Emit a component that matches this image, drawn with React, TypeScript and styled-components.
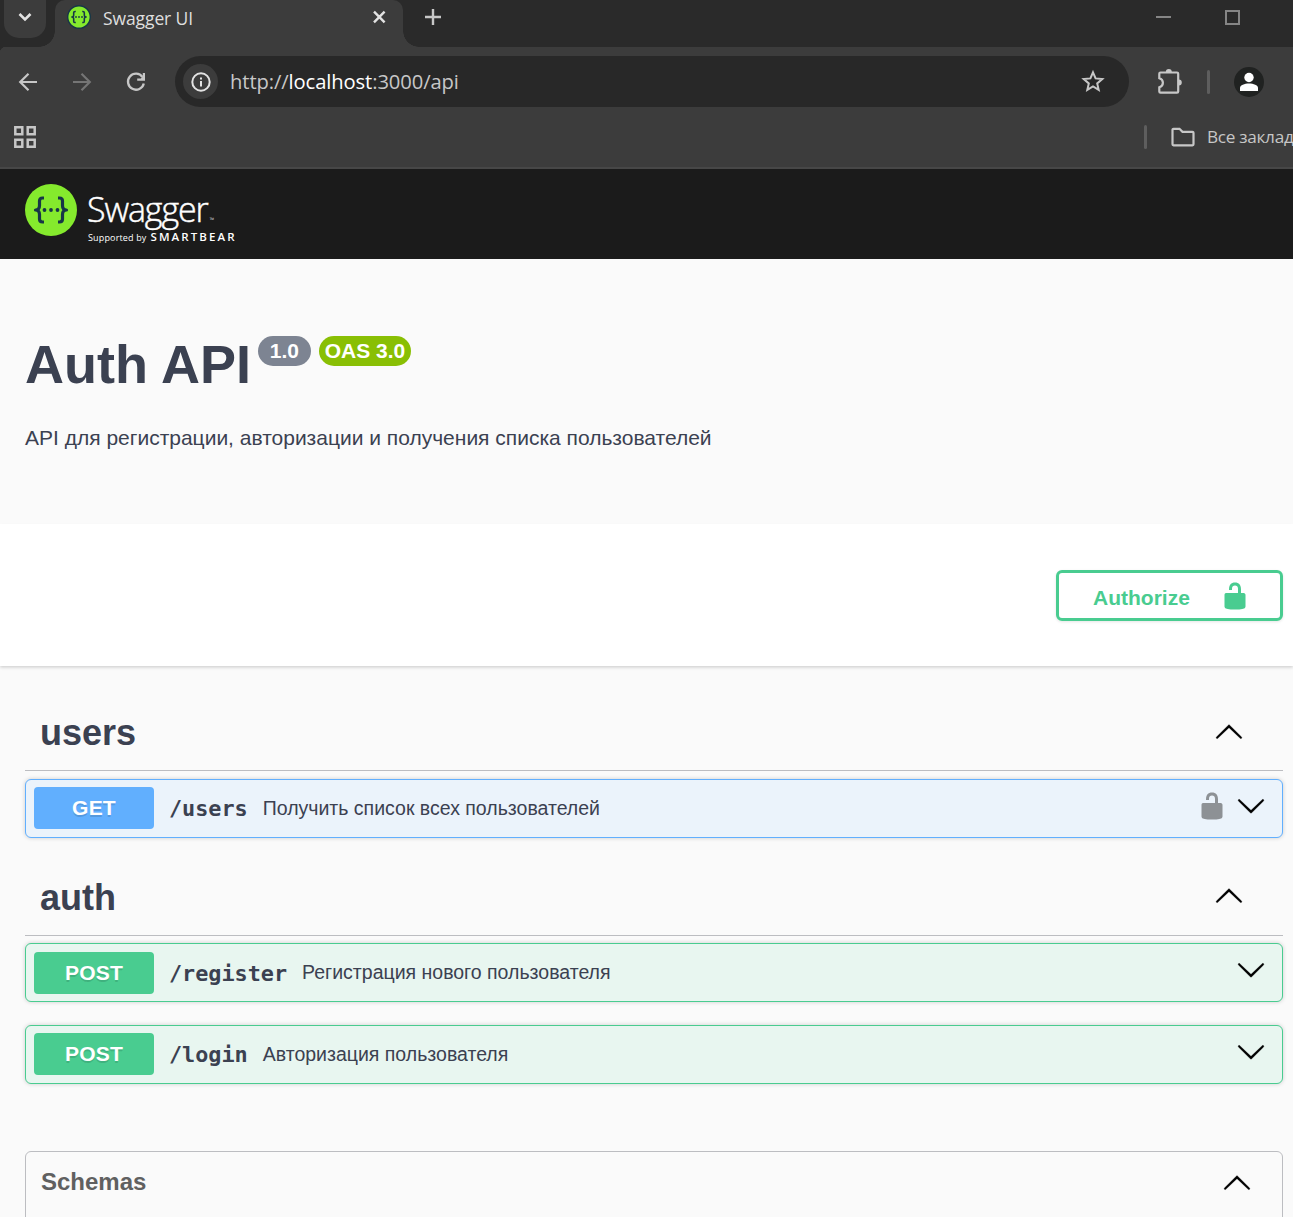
import React from "react";
import styled, { createGlobalStyle } from "styled-components";

const GlobalStyle = createGlobalStyle`
  * { box-sizing: border-box; }
  html, body { margin: 0; padding: 0; }
  body { background: #fafafa; overflow: hidden; }
`;

const UI_FONT = '"Open Sans", "Noto Sans", sans-serif';
const PAGE_FONT = '"Liberation Sans", Arial, sans-serif';

const Window = styled.div`
  width: 100%;
  height: 1217px;
  overflow: hidden;
  display: flex;
  flex-direction: column;
  background: #fafafa;
  font-family: ${PAGE_FONT};
  color: #3b4151;
  white-space: nowrap;
`;

/* ---------- browser chrome ---------- */

const TabStrip = styled.header`
  flex: none;
  display: flex;
  height: 47px;
  padding-left: 4px;
  background: #2a2a2a;
`;

const TabSearch = styled.div`
  display: flex;
  justify-content: center;
  width: 42px;
  height: 38px;
  padding-top: 9px;
  border-radius: 0 0 15px 15px;
  background: #3c3c3c;
`;

const Tab = styled.div`
  position: relative;
  display: flex;
  align-items: flex-start;
  width: 348px;
  height: 47px;
  margin-left: 9px;
  padding: 5px 16px 0 12px;
  border-radius: 10px 10px 0 0;
  background: #3c3c3c;

  &::before,
  &::after {
    content: "";
    position: absolute;
    bottom: 0;
    width: 16px;
    height: 16px;
  }
  &::before {
    left: -16px;
    background: radial-gradient(circle at 0 0, transparent 15.5px, #3c3c3c 16px);
  }
  &::after {
    right: -16px;
    background: radial-gradient(circle at 100% 0, transparent 15.5px, #3c3c3c 16px);
  }
`;

const TabTitle = styled.span`
  flex: 1;
  margin-left: 12px;
  font: 400 17.5px/26px ${UI_FONT};
  letter-spacing: -0.1px;
  color: #dfdfdf;
`;

const CloseTab = styled.div`
  display: flex;
  padding-top: 5px;
`;

const NewTab = styled.div`
  display: flex;
  flex: 1;
  padding: 9px 0 0 22px;
`;

const WindowButtons = styled.div`
  display: flex;
  gap: 54px;
  padding: 10px 53px 0 0;
`;

const Toolbar = styled.div`
  flex: none;
  display: flex;
  align-items: center;
  height: 70px;
  padding: 0 29px 1px 16px;
  background: radial-gradient(circle at 6px 6px, #3c3c3c 6px, #2a2a2a 6.5px) 0 0 / 6px 6px no-repeat, #3c3c3c;
`;

const NavButtons = styled.div`
  display: flex;
  gap: 30px;
  padding-top: 1px;
`;

const AddressBar = styled.div`
  display: flex;
  align-items: center;
  width: 954px;
  height: 51px;
  margin: 0 26px 0 27px;
  padding: 0 23px 0 8px;
  border-radius: 26px;
  background: #282828;
`;

const SiteInfo = styled.div`
  display: grid;
  place-items: center;
  width: 35px;
  height: 35px;
  border-radius: 50%;
  background: #3c3c3c;
`;

const Url = styled.span`
  flex: 1;
  margin-left: 12px;
  padding-bottom: 2px;
  font: 400 20.2px/28px ${UI_FONT};
  letter-spacing: -0.1px;
  color: #c7c7c7;

  b {
    font-weight: 400;
    color: #ffffff;
  }
`;

const Separator = styled.i<{ $gap: string }>`
  flex: none;
  width: 3px;
  height: 24px;
  margin: ${(p) => p.$gap};
  border-radius: 2px;
  background: #5e5e5e;
`;

const Avatar = styled.div`
  display: grid;
  place-items: center;
  width: 30px;
  height: 30px;
  border-radius: 50%;
  background: #202221;
`;

const Bookmarks = styled.div`
  flex: none;
  display: flex;
  align-items: center;
  height: 52px;
  padding: 0 0 10px 14px;
  border-bottom: 2px solid #474747;
  background: #3c3c3c;
`;

const AllBookmarks = styled.div`
  display: flex;
  align-items: center;
  width: 149px;
  margin-left: auto;
  overflow: hidden;

  svg {
    flex: none;
  }
`;

const BookmarkLabel = styled.span`
  margin-left: 12px;
  font: 400 17.2px/24px ${UI_FONT};
  letter-spacing: -0.3px;
  color: #c7c7c7;
`;

/* ---------- swagger page ---------- */

const Topbar = styled.div`
  flex: none;
  display: flex;
  height: 90px;
  padding: 15px 25px 0;
  background: #1b1b1b;
  color: #fff;
`;

const Brand = styled.div`
  margin-left: 10px;
  padding-top: 3px;
  font-family: ${UI_FONT};
`;

const BrandName = styled.div`
  height: 44px;
  font-size: 34px;
  font-weight: 300;
  line-height: 44px;
  letter-spacing: -1.1px;
  -webkit-text-stroke: 0.45px #fff;

  small {
    margin-left: 2px;
    font-size: 6px;
    letter-spacing: 0;
    -webkit-text-stroke: 0;
  }
`;

const BrandOwner = styled.div`
  display: flex;
  align-items: baseline;
  gap: 4px;
  height: 12px;
  padding-left: 1px;
  font-size: 9px;
  line-height: 12px;
  letter-spacing: 0.15px;

  b {
    font-size: 11.5px;
    font-weight: 600;
    line-height: 12px;
    letter-spacing: 2.1px;
  }
`;

const Info = styled.section`
  flex: none;
  height: 265px;
  padding: 75px 25px 0;
`;

const TitleRow = styled.div`
  display: flex;
  align-items: flex-start;
`;

const Title = styled.h1`
  height: 62px;
  margin: 0;
  font-size: 54px;
  line-height: 60px;
  font-weight: 700;
`;

const Badge = styled.span<{ $color: string; $width: number; $gap: number }>`
  width: ${(p) => p.$width}px;
  height: 30px;
  margin: 2px 0 0 ${(p) => p.$gap}px;
  border-radius: 15px;
  background: ${(p) => p.$color};
  color: #fff;
  font-size: 21px;
  line-height: 30px;
  font-weight: 700;
  text-align: center;
`;

const Description = styled.p`
  margin: 29px 0 0;
  font-size: 21px;
  line-height: 26px;
`;

const AuthSection = styled.section`
  flex: none;
  display: flex;
  justify-content: flex-end;
  align-items: flex-start;
  height: 142px;
  padding: 46px 10px 0;
  background: #fff;
  box-shadow: 0 1.5px 3px rgba(0, 0, 0, 0.17);
`;

const AuthorizeButton = styled.button`
  display: flex;
  align-items: center;
  justify-content: space-between;
  width: 227px;
  height: 51px;
  padding: 0 30px 0 34px;
  border: 3px solid #49cc90;
  border-radius: 6px;
  background: transparent;
  box-shadow: 0 1px 3px rgba(0, 0, 0, 0.1);
  color: #49cc90;
  font: 700 21px/26px ${PAGE_FONT};

  span {
    padding-top: 4px;
  }
`;

const Operations = styled.main`
  padding: 28px 10px 0 25px;
`;

const TagHeader = styled.div<{ $lift: number }>`
  display: flex;
  align-items: center;
  justify-content: space-between;
  height: 77px;
  padding: 0 39px 1px 15px;
  border-bottom: 1px solid #bcbdc1;

  > svg {
    margin-bottom: ${(p) => p.$lift}px;
  }
`;

const TagName = styled.h2`
  margin: 0;
  padding-top: 3px;
  font-size: 36px;
  line-height: 42px;
  font-weight: 700;
`;

const TagSection = styled.section<{ $before?: number }>`
  margin-top: ${(p) => p.$before ?? 0}px;
`;

const OpRow = styled.div<{ $color: string; $tint: string; $before: number; $inset: number }>`
  display: flex;
  align-items: flex-start;
  height: 59px;
  margin-top: ${(p) => p.$before}px;
  padding: 0 16px 0 8px;
  border: 1px solid ${(p) => p.$color};
  border-radius: 6px;
  background: ${(p) => p.$tint};
  box-shadow: 0 0 4px rgba(0, 0, 0, 0.19);

  > :nth-child(-n + 2) {
    margin-top: ${(p) => p.$inset}px;
  }
`;

const Method = styled.span<{ $color: string }>`
  width: 120px;
  height: 42px;
  border-radius: 4px;
  background: ${(p) => p.$color};
  color: #fff;
  font-size: 21px;
  line-height: 42px;
  font-weight: 700;
  letter-spacing: 0.2px;
  text-align: center;
  text-shadow: 0 1.5px 0 rgba(0, 0, 0, 0.12);
`;

const Path = styled.span`
  margin-left: 15px;
  padding-top: 9px;
  font: 700 21.8px/26px "DejaVu Sans Mono", monospace;
`;

const Summary = styled.span`
  flex: 1;
  margin-left: 15px;
  padding-top: 15px;
  font-size: 19.5px;
  line-height: 26px;
`;

const OpIcons = styled.span`
  display: flex;
  align-items: flex-start;
  gap: 9px;
  padding-top: 11px;

  svg:last-child {
    margin-top: 1px;
  }
`;

const Schemas = styled.section`
  display: flex;
  justify-content: space-between;
  height: 90px;
  margin-top: 67px;
  padding: 15px 30px 0 15px;
  border: 1px solid #bcbdc1;
  border-radius: 6px;
`;

const SchemasTitle = styled.h4`
  margin: 0;
  font-size: 24px;
  line-height: 30px;
  font-weight: 700;
  color: #606060;
`;

/* ---------- drawings ---------- */

const SwaggerMark = ({ size, ring }: { size: number; ring?: boolean }) => (
  <svg width={size} height={size} viewBox="0 0 52 52">
    <circle cx="26" cy="26" r={ring ? 24.5 : 26} fill="#85ea2d" stroke="#173647" strokeWidth={ring ? 3 : 0} />
    <g fill="none" stroke="#173647" strokeWidth={ring ? 3.4 : 3.2} strokeLinejoin="round">
      <path d="M19 14h-1.500c-2.200 0-3 1.200-3 3v4.500c0 2.800-1 4.500-4 4.500 3 0 4 1.700 4 4.500V35c0 1.800.8 3 3 3H19" />
      <path d="M33 14h1.500c2.200 0 3 1.200 3 3v4.500c0 2.800 1 4.500 4 4.500-3 0-4 1.700-4 4.500V35c0 1.800-.8 3-3 3H33" />
    </g>
    <g fill="#173647">
      <circle cx="19.500" cy="26" r="1.900" />
      <circle cx="26" cy="26" r="1.900" />
      <circle cx="32.500" cy="26" r="1.900" />
    </g>
  </svg>
);

const Arrow = ({ down }: { down?: boolean }) => (
  <svg width="30" height="30" viewBox="0 0 20 20" fill="#000" stroke="#000" strokeWidth="0.150">
    <path
      transform={down ? "rotate(180 10 10)" : undefined}
      d="M17.418 14.908c.272.268.709.268.979 0s.271-.701 0-.969l-7.908-7.830c-.27-.268-.707-.268-.979 0l-7.908 7.830c-.27.268-.27.701 0 .969.271.268.709.268.979 0L10 7.767l7.418 7.141z"
    />
  </svg>
);

const OpenLock = ({ color }: { color: string }) => (
  <svg width="30" height="30" viewBox="0 0 20 20" fill={color}>
    <path d="M15.8 8H14V5.600C14 2.703 12.665 1 10 1 7.334 1 6 2.703 6 5.600V6h2v-.801C8 3.754 8.797 3 10 3c1.203 0 2 .754 2 2.199V8H4c-.553 0-1 .646-1 1.199V17c0 .549.428 1.139.951 1.307l1.197.387C5.672 18.861 6.550 19 7.100 19h5.800c.549 0 1.428-.139 1.951-.307l1.196-.387c.524-.167.953-.757.953-1.306V9.199C17 8.646 16.352 8 15.800 8z" />
  </svg>
);

const Glyph = ({ w, h, color = "#c7c7c7", width = 2.2, children }: { w: number; h: number; color?: string; width?: number; children: React.ReactNode }) => (
  <svg width={w} height={h} viewBox={`0 0 ${w} ${h}`} fill="none" stroke={color} strokeWidth={width}>
    {children}
  </svg>
);

const COLORS = {
  GET: { color: "#61affe", tint: "#ebf3fb" },
  POST: { color: "#49cc90", tint: "#e8f6f0" },
};

const Operation = ({ method, path, summary, before, inset = 7, locked }: { method: "GET" | "POST"; path: string; summary: string; before: number; inset?: number; locked?: boolean }) => (
  <OpRow $color={COLORS[method].color} $tint={COLORS[method].tint} $before={before} $inset={inset}>
    <Method $color={COLORS[method].color}>{method}</Method>
    <Path>{path}</Path>
    <Summary>{summary}</Summary>
    <OpIcons>
      {locked && <OpenLock color="#8d9195" />}
      <Arrow down />
    </OpIcons>
  </OpRow>
);

export default function App() {
  return (
    <Window>
      <GlobalStyle />
      <TabStrip>
        <TabSearch>
          <Glyph w={16} h={16} color="#e3e3e3" width={2.6}><path d="M2.500 5l5.500 5.500L13.500 5" /></Glyph>
        </TabSearch>
        <Tab>
          <SwaggerMark size={24} ring />
          <TabTitle>Swagger UI</TabTitle>
          <CloseTab>
            <Glyph w={15} h={15} color="#e3e3e3" width={2.4}><path d="M2 1.700l10.600 10.600M12.600 1.700L2 12.300" /></Glyph>
          </CloseTab>
        </Tab>
        <NewTab>
          <Glyph w={16} h={16} width={2.4}><path d="M8 0v16M0 8h16" /></Glyph>
        </NewTab>
        <WindowButtons>
          <Glyph w={15} h={15} color="#858585" width={2}><path d="M0 7h15" /></Glyph>
          <Glyph w={15} h={15} color="#858585" width={2}><path d="M1 1h13v13H1z" /></Glyph>
        </WindowButtons>
      </TabStrip>

      <Toolbar>
        <NavButtons>
          <Glyph w={24} h={24}><path d="M21 12H4.500M12.500 3.700L4.200 12l8.300 8.300" /></Glyph>
          <Glyph w={24} h={24} color="#757575"><path d="M3 12h16.500M11.500 3.700l8.300 8.300-8.300 8.300" /></Glyph>
          <Glyph w={24} h={24} width={2.300}>
            <path d="M18.500 7A8 8 0 1 0 19.800 13.500" />
            <path d="M18.800 3h2.200v7.800h-7.800V8.600h3.600l2-2z" fill="#c7c7c7" stroke="none" />
          </Glyph>
        </NavButtons>
        <AddressBar>
          <SiteInfo>
            <Glyph w={20} h={20} color="#e3e3e3" width={2}><circle cx="10" cy="10" r="8.700" /><path d="M10 9v5.500M10 5.500v2" /></Glyph>
          </SiteInfo>
          <Url>http://<b>localhost</b>:3000/api</Url>
          <Glyph w={26} h={26} width={2}><path d="M13 3.300l2.600 6.100 6.700.6-5.100 4.400 1.500 6.500-5.700-3.400-5.700 3.400 1.500-6.500-5.100-4.400 6.700-.6z" /></Glyph>
        </AddressBar>
        <Glyph w={28} h={28} width={2.200}>
          <path d="M5.500 4.500h16.500a1.200 1.200 0 0 1 1.200 1.200v17.800a1.200 1.200 0 0 1-1.200 1.200H5.500a1.200 1.200 0 0 1-1.200-1.200v-4.300c4.800-1.500 4.800-7.500 0-9V5.700a1.200 1.200 0 0 1 1.200-1.200z" />
          <path d="M10.800 4a3 3 0 0 1 6 0zM23.800 11.500a3 3 0 0 1 0 6z" fill="#c7c7c7" strokeWidth="0" />
        </Glyph>
        <Separator $gap="0 24px 0 24px" />
        <Avatar>
          <svg width="20" height="20" viewBox="0 0 20 20" fill="#fff">
            <circle cx="10" cy="5.500" r="4.700" />
            <path d="M1 19v-3c0-3 4.500-4.500 9-4.500s9 1.500 9 4.500v3z" />
          </svg>
        </Avatar>
      </Toolbar>

      <Bookmarks>
        <Glyph w={22} h={22} width={2.500}>
          <path d="M1.300 1.300h7v7h-7zM13.700 1.300h7v7h-7zM1.300 13.700h7v7h-7zM13.700 13.700h7v7h-7z" />
        </Glyph>
        <AllBookmarks>
          <Separator $gap="0 24px 0 0" />
          <Glyph w={24} h={20}>
            <path d="M2.500 1.800h6l3 3h10a1 1 0 0 1 1 1v11.500a1 1 0 0 1-1 1h-19a1 1 0 0 1-1-1V2.800a1 1 0 0 1 1-1z" />
          </Glyph>
          <BookmarkLabel>Все заклад</BookmarkLabel>
        </AllBookmarks>
      </Bookmarks>

      <Topbar>
        <SwaggerMark size={52} />
        <Brand>
          <BrandName>Swagger<small>™</small></BrandName>
          <BrandOwner>Supported by <b>SMARTBEAR</b></BrandOwner>
        </Brand>
      </Topbar>

      <Info>
        <TitleRow>
          <Title>Auth API</Title>
          <Badge $color="#7d8492" $width={53} $gap={7}>1.0</Badge>
          <Badge $color="#89bf04" $width={92} $gap={8}>OAS 3.0</Badge>
        </TitleRow>
        <Description>API для регистрации, авторизации и получения списка пользователей</Description>
      </Info>

      <AuthSection>
        <AuthorizeButton>
          <span>Authorize</span>
          <OpenLock color="#49cc90" />
        </AuthorizeButton>
      </AuthSection>

      <Operations>
        <TagSection>
          <TagHeader $lift={2}>
            <TagName>users</TagName>
            <Arrow />
          </TagHeader>
          <Operation method="GET" path="/users" summary="Получить список всех пользователей" before={8} locked />
        </TagSection>
        <TagSection $before={21}>
          <TagHeader $lift={4}>
            <TagName>auth</TagName>
            <Arrow />
          </TagHeader>
          <Operation method="POST" path="/register" summary="Регистрация нового пользователя" before={7} inset={8} />
          <Operation method="POST" path="/login" summary="Авторизация пользователя" before={23} />
        </TagSection>
        <Schemas>
          <SchemasTitle>Schemas</SchemasTitle>
          <Arrow />
        </Schemas>
      </Operations>
    </Window>
  );
}
